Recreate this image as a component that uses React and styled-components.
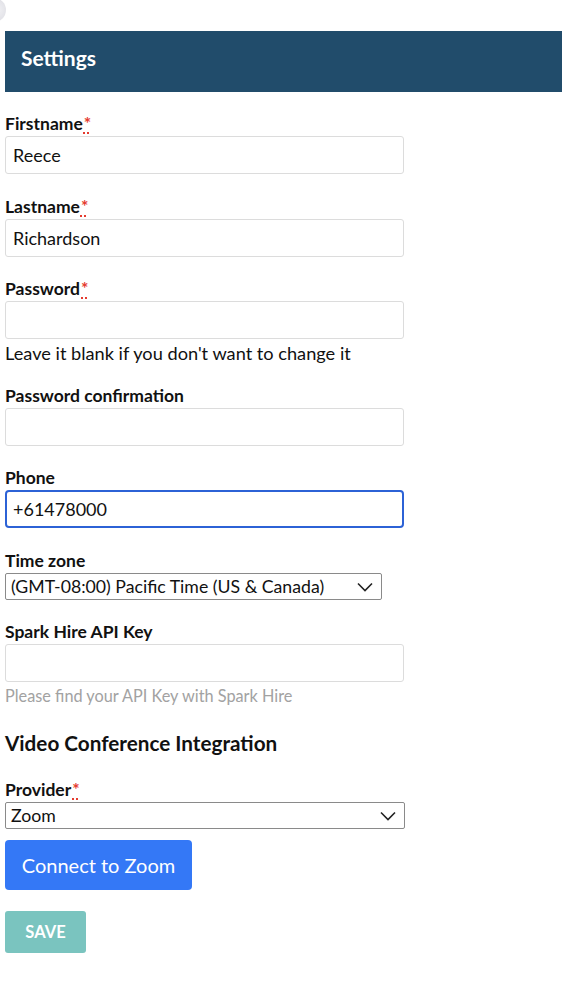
import React from 'react'
import styled, { createGlobalStyle } from 'styled-components'

const Global = createGlobalStyle`
  body {
    margin: 0;
    background: #fff;
    font-family: 'Lato', 'Open Sans', sans-serif;
    color: #111;
  }
`

const Page = styled.div`
  width: 562px;
  padding-left: 5px;
  box-sizing: border-box;
`

const TopStrip = styled.div`
  height: 31px;
  overflow: hidden;
  margin-left: -5px;
`

const Blob = styled.div`
  width: 24px;
  height: 24px;
  border-radius: 50%;
  margin-left: -18px;
  margin-top: -2px;
  background: radial-gradient(circle at 60% 50%, #f2f2f5 0%, #dcdce2 80%, #e9e9ee 100%);
`

const Header = styled.div`
  height: 61px;
  background: #214c6b;
  display: flex;
  align-items: center;
  padding-left: 16px;
  padding-bottom: 9px;
  box-sizing: border-box;
  color: #fff;
  font-weight: 700;
  font-size: 21px;
`

const Form = styled.form`
  padding-top: 22px;
  display: flex;
  flex-direction: column;
`

const Field = styled.div`
  display: flex;
  flex-direction: column;
  margin-bottom: ${p => (p.gap === undefined ? 22 : p.gap)}px;
`

const Label = styled.label`
  font-weight: 700;
  font-size: 17.5px;
  line-height: 20px;
  margin-bottom: 2px;
`

const Req = styled.abbr`
  color: #e53b2f;
  text-decoration: underline dotted #e53b2f;
  text-underline-offset: 2px;
  text-decoration-thickness: 2px;
  margin-left: 1px;
`

const Input = styled.input`
  width: 399px;
  height: 38px;
  box-sizing: border-box;
  border: ${p => (p.focused ? '2px solid #2c62d6' : '1px solid #dcdcdc')};
  border-radius: ${p => (p.focused ? 4 : 3)}px;
  padding: 0 ${p => (p.focused ? 6 : 7)}px;
  font-family: inherit;
  font-size: 18px;
  color: #111;
  outline: none;
  background: #fff;
`

const Help = styled.div`
  line-height: 20px;
  margin-top: 4px;
  color: ${p => (p.muted ? '#a2a2a2' : '#111')};
  font-size: ${p => (p.muted ? 16.3 : 18.2)}px;
`

const SelectBox = styled.div`
  width: ${p => p.w}px;
  height: 27px;
  box-sizing: border-box;
  border: 1px solid #8a8a8a;
  border-radius: 2px;
  display: flex;
  align-items: center;
  justify-content: space-between;
  padding: 0 8px 0 5px;
  font-size: 17.7px;
`

const SectionTitle = styled.h3`
  margin: 25px 0 25px;
  font-size: 20.7px;
  font-weight: 700;
  line-height: 24px;
`

const ConnectButton = styled.button`
  align-self: flex-start;
  margin-top: 11px;
  width: 187px;
  height: 50px;
  border: none;
  border-radius: 4px;
  background: #3478f6;
  color: #fff;
  font-family: inherit;
  font-size: 20px;
`

const SaveButton = styled.button`
  align-self: flex-start;
  margin-top: 21px;
  width: 81px;
  height: 42px;
  border: none;
  border-radius: 3px;
  background: #7ac4bf;
  color: #fff;
  font-family: inherit;
  font-weight: 700;
  font-size: 16.5px;
`

const Chevron = () => (
  <svg width="16" height="10" viewBox="0 0 16 10" fill="none">
    <path d="M1 1.5 L8 8.5 L15 1.5" stroke="#222" strokeWidth="1.6" />
  </svg>
)

const TextField = ({ label, required, value, help, muted, focused, gap }) => (
  <Field gap={gap}>
    <Label>
      {label}
      {required && <Req title="required">*</Req>}
    </Label>
    <Input defaultValue={value} focused={focused} />
    {help && <Help muted={muted}>{help}</Help>}
  </Field>
)

const App = () => (
  <>
    <Global />
    <Page>
      <TopStrip>
        <Blob />
      </TopStrip>
      <Header>Settings</Header>
      <Form onSubmit={e => e.preventDefault()}>
        <TextField label="Firstname" required value="Reece" gap={23} />
        <TextField label="Lastname" required value="Richardson" />
        <TextField label="Password" required help="Leave it blank if you don't want to change it" gap={23} />
        <TextField label="Password confirmation" />
        <TextField label="Phone" value="+61478000" focused gap={23} />
        <Field>
          <Label>Time zone</Label>
          <SelectBox w={377}>
            <span>(GMT-08:00) Pacific Time (US &amp; Canada)</span>
            <Chevron />
          </SelectBox>
        </Field>
        <TextField label="Spark Hire API Key" muted help="Please find your API Key with Spark Hire" gap={0} />
        <SectionTitle>Video Conference Integration</SectionTitle>
        <Field gap={0}>
          <Label>
            Provider<Req title="required">*</Req>
          </Label>
          <SelectBox w={400}>
            <span>Zoom</span>
            <Chevron />
          </SelectBox>
        </Field>
        <ConnectButton type="button">Connect to Zoom</ConnectButton>
        <SaveButton type="submit">SAVE</SaveButton>
      </Form>
    </Page>
  </>
)

export default App
